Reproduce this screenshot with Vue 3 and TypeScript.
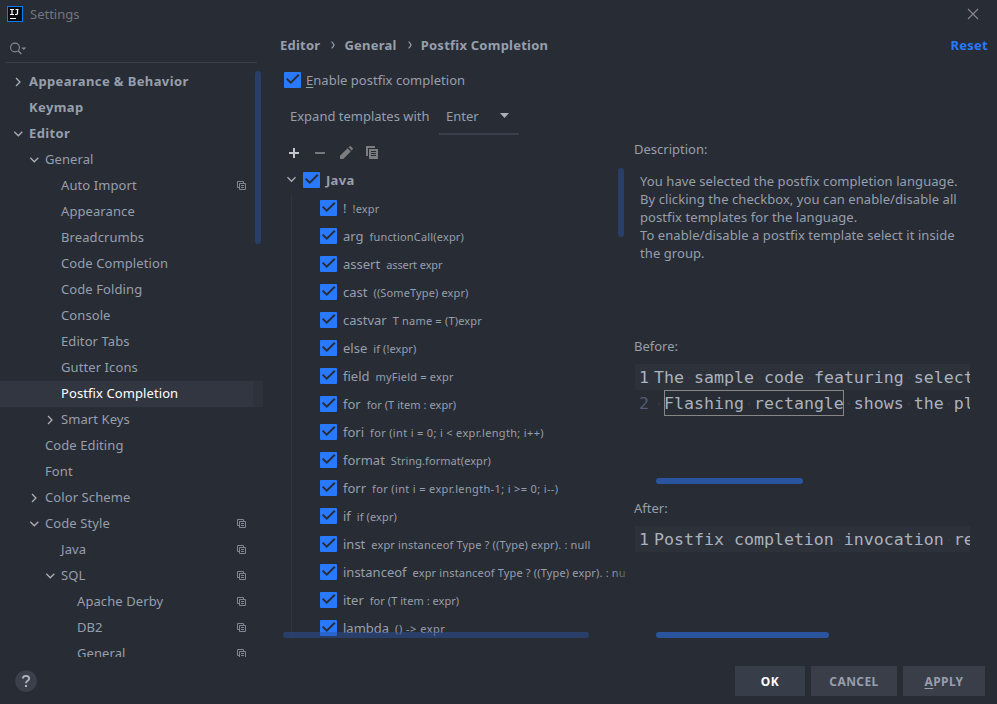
<script setup lang="ts">
interface TreeItem {
  label: string
  depth: number
  arrow?: 'open' | 'closed'
  bold?: boolean
  copy?: boolean
  selected?: boolean
}
interface Template {
  name: string
  example: string
  tracking: number
}

const tree: TreeItem[] = [
  { label: 'Appearance & Behavior', depth: 0, arrow: 'closed', bold: true },
  { label: 'Keymap', depth: 0, bold: true },
  { label: 'Editor', depth: 0, arrow: 'open', bold: true },
  { label: 'General', depth: 1, arrow: 'open' },
  { label: 'Auto Import', depth: 2, copy: true },
  { label: 'Appearance', depth: 2 },
  { label: 'Breadcrumbs', depth: 2 },
  { label: 'Code Completion', depth: 2 },
  { label: 'Code Folding', depth: 2 },
  { label: 'Console', depth: 2 },
  { label: 'Editor Tabs', depth: 2 },
  { label: 'Gutter Icons', depth: 2 },
  { label: 'Postfix Completion', depth: 2, selected: true },
  { label: 'Smart Keys', depth: 2, arrow: 'closed' },
  { label: 'Code Editing', depth: 1 },
  { label: 'Font', depth: 1 },
  { label: 'Color Scheme', depth: 1, arrow: 'closed' },
  { label: 'Code Style', depth: 1, arrow: 'open', copy: true },
  { label: 'Java', depth: 2, copy: true },
  { label: 'SQL', depth: 2, arrow: 'open', copy: true },
  { label: 'Apache Derby', depth: 3, copy: true },
  { label: 'DB2', depth: 3, copy: true },
  { label: 'General', depth: 3, copy: true },
]

const templates: Template[] = [
  { name: '!', example: '!expr', tracking: 0.2 },
  { name: 'arg', example: 'functionCall(expr)', tracking: 0.17 },
  { name: 'assert', example: 'assert expr', tracking: -0.1 },
  { name: 'cast', example: '((SomeType) expr)', tracking: 0.13 },
  { name: 'castvar', example: 'T name = (T)expr', tracking: 0.19 },
  { name: 'else', example: 'if (!expr)', tracking: 0.1 },
  { name: 'field', example: 'myField = expr', tracking: 0.2 },
  { name: 'for', example: 'for (T item : expr)', tracking: 0.05 },
  { name: 'fori', example: 'for (int i = 0; i < expr.length; i++)', tracking: 0.33 },
  { name: 'format', example: 'String.format(expr)', tracking: 0.05 },
  { name: 'forr', example: 'for (int i = expr.length-1; i >= 0; i--)', tracking: 0.35 },
  { name: 'if', example: 'if (expr)', tracking: 0.1 },
  { name: 'inst', example: 'expr instanceof Type ? ((Type) expr). : null', tracking: 0.16 },
  { name: 'instanceof', example: 'expr instanceof Type ? ((Type) expr). : null', tracking: 0.16 },
  { name: 'iter', example: 'for (T item : expr)', tracking: 0.05 },
  { name: 'lambda', example: '() -> expr', tracking: 0.5 },
]
</script>

<template>
  <div class="window">
    <header class="titlebar">
      <svg class="logo" width="16" height="16" viewBox="0 0 16 16">
        <rect x="0.5" y="0.5" width="15" height="15" fill="#0b0d10" stroke="#087cfa" />
        <path d="M3 3.5h4M5 3.5v5M3 8.500h4M8.500 3.500h3M10.500 3v4.200q0 1.300-1.300 1.300H8" fill="none" stroke="#fff" stroke-width="1.200" />
        <rect x="3" y="12" width="6" height="1" fill="#fff" />
      </svg>
      <span class="title">Settings</span>
      <svg class="close" width="12" height="12" viewBox="0 0 12 12"><path d="M1 1l10 10M11 1L1 11" /></svg>
    </header>

    <div class="body">
      <aside class="sidebar">
        <div class="search">
          <svg width="17" height="13" viewBox="0 0 17 13">
            <circle cx="5" cy="5.5" r="4.4" fill="none" stroke="#868b95" stroke-width="1.1" />
            <path d="M8.200 8.700l3.200 3.200" stroke="#868b95" stroke-width="1.400" />
            <path d="M11.300 5.400h5l-2.500 2.700z" fill="#868b95" />
          </svg>
        </div>
        <nav class="tree">
          <div
            v-for="(item, i) in tree"
            :key="i"
            class="node"
            :class="['depth' + item.depth, { selected: item.selected, bold: item.bold }]"
          >
            <span class="arrow">
              <svg v-if="item.arrow === 'open'" width="10" height="10" viewBox="0 0 10 10"><path d="M1.300 2.800l4 4 4-4" /></svg>
              <svg v-else-if="item.arrow === 'closed'" width="10" height="10" viewBox="0 0 10 10"><path d="M3 1l4 4-4 4" /></svg>
            </span>
            <span class="label">{{ item.label }}</span>
            <svg v-if="item.copy" class="copy" width="9" height="9" viewBox="0 0 9 9">
              <path d="M2 6.500H.5v-6h6V2M2.500 2.500h6v6h-6zM4 4.500h3M4 6.500h3" />
            </svg>
          </div>
          <div class="vbar"></div>
        </nav>
      </aside>

      <main class="content">
        <div class="crumbs">
          <span>Editor</span>
          <svg width="4" height="8" viewBox="0 0 4 8"><path d="M.6.6Q2.600 2.600 3 4 2.600 5.400.6 7.400" /></svg>
          <span>General</span>
          <svg width="4" height="8" viewBox="0 0 4 8"><path d="M.6.6Q2.600 2.600 3 4 2.600 5.400.6 7.400" /></svg>
          <span>Postfix Completion</span>
          <a class="reset">Reset</a>
        </div>

        <div class="enable">
          <span class="check"><svg width="17" height="16" viewBox="0 0 17 16"><path d="M2.600 6.600l4.200 4 8-7.800" /></svg></span>
          <span><u>E</u>nable postfix completion</span>
        </div>

        <div class="expand">
          <span class="expand-label">Expand templates with</span>
          <div class="select">
            <span>Enter</span>
            <svg width="9" height="5" viewBox="0 0 9 5"><path d="M0 0h9L4.500 5z" fill="#a9b0bc" /></svg>
          </div>
        </div>

        <div class="columns">
          <section class="left">
            <div class="toolbar">
              <svg width="16" height="16" viewBox="0 0 16 16"><path d="M8 3v10M3 8h10" stroke="#c3c6cb" stroke-width="2" /></svg>
              <svg width="16" height="16" viewBox="0 0 16 16"><path d="M3 8h10" stroke="#75777a" stroke-width="2" /></svg>
              <svg width="16" height="16" viewBox="0 0 16 16">
                <path d="M2 14v-3.200l7.600-7.600 3.200 3.200L5.200 14zM10.500 2.300l.9-.9q.8-.6 1.500 0l1.700 1.700q.6.700 0 1.500l-.9.9z" fill="#7c7d7f" />
              </svg>
              <svg width="16" height="16" viewBox="0 0 16 16">
                <path d="M2 1h9v2H4v8H2z" fill="#7c7d7f" />
                <path d="M5 4h9v10H5z" fill="#7c7d7f" />
                <path d="M7 6.500h5M7 8.500h5M7 10.500h5" stroke="#282c34" />
              </svg>
            </div>
            <div class="list">
              <div class="group">
                <svg class="chev" width="10" height="10" viewBox="0 0 10 10"><path d="M1.500 2.300l4 4 4-4" /></svg>
                <span class="check"><svg width="17" height="16" viewBox="0 0 17 16"><path d="M2.600 6.600l4.200 4 8-7.800" /></svg></span>
                <b>Java</b>
              </div>
              <div class="items">
                <div v-for="t in templates" :key="t.name" class="item">
                  <span class="check"><svg width="17" height="16" viewBox="0 0 17 16"><path d="M2.600 6.600l4.200 4 8-7.800" /></svg></span>
                  <span class="name">{{ t.name }}</span>
                  <span class="example" :style="{ letterSpacing: t.tracking + 'px' }">{{ t.example }}</span>
                </div>
              </div>
              <div class="fade"></div>
              <div class="list-vbar"></div>
              <div class="list-hbar"></div>
            </div>
          </section>

          <section class="right">
            <div class="caption">Description:</div>
            <p class="description">
              You have selected the postfix completion language.<br />By clicking the checkbox, you can enable/disable all<br />postfix templates for the language.<br />To enable/disable a postfix template select it inside<br />the group.
            </p>
            <div class="caption">Before:</div>
            <div class="editor before">
              <div class="line current"><span class="num">1</span><span>The<i>·</i>sample<i>·</i>code<i>·</i>featuring<i>·</i>select</span></div>
              <div class="line"><span class="num">2</span><span><i>·</i><span class="flash">Flashing<i>·</i>rectangle</span><i>·</i>shows<i>·</i>the<i>·</i>pl</span></div>
              <div class="hbar"></div>
            </div>
            <div class="caption">After:</div>
            <div class="editor after">
              <div class="line current"><span class="num">1</span><span>Postfix<i>·</i>completion<i>·</i>invocation<i>·</i>re</span></div>
              <div class="hbar"></div>
            </div>
          </section>
        </div>
      </main>
    </div>

    <footer class="footer">
      <span class="help">
        <svg width="22" height="22" viewBox="0 0 22 22">
          <circle cx="11" cy="11" r="10.800" fill="#3c404b" />
          <path d="M7.900 8.500q.1-2.600 3.100-2.600 3.100 0 3.100 2.600 0 1.300-1.500 2.300-1.600 1-1.600 2.500" fill="none" stroke="#b4b8c0" stroke-width="1.800" />
          <rect x="10" y="15" width="2" height="2" fill="#b4b8c0" />
        </svg>
      </span>
      <div class="buttons">
        <button class="btn ok">OK</button>
        <button class="btn cancel">CANCEL</button>
        <button class="btn apply"><u>A</u>PPLY</button>
      </div>
    </footer>
  </div>
</template>

<style>
body {
  background: #282c34;
}
</style>

<style scoped>
.window {
  width: 997px;
  height: 704px;
  display: flex;
  flex-direction: column;
  overflow: hidden;
  box-sizing: border-box;
  background: #282c34;
  color: #979fad;
  font: 13px/18px 'Noto Sans', sans-serif;
  white-space: nowrap;
}
svg {
  display: block;
  flex: none;
}
.titlebar {
  height: 28px;
  flex: none;
  display: flex;
  align-items: center;
  padding: 0 18px 0 7px;
}
.title {
  margin-left: 7px;
  color: #72767e;
}
.close {
  margin-left: auto;
}
.close path {
  fill: none;
  stroke: #858991;
  stroke-width: 1.1;
}
.body {
  display: flex;
  height: 629px;
  flex: none;
}
.sidebar {
  width: 263px;
  flex: none;
  display: flex;
  flex-direction: column;
}
.search {
  height: 35px;
  box-sizing: border-box;
  margin: 0 6px;
  border-bottom: 1px solid #3a3f4b;
  padding: 14px 0 0 4px;
  flex: none;
}
.tree {
  position: relative;
  margin-top: 6px;
  flex: 1;
  min-height: 0;
  overflow: hidden;
}
.node {
  height: 26px;
  display: flex;
  align-items: center;
  padding-right: 17px;
  box-sizing: border-box;
  letter-spacing: 0.09px;
}
.label {
  padding-bottom: 2px;
}
.depth0 { padding-left: 13px; }
.depth1 { padding-left: 29px; }
.depth2 { padding-left: 45px; }
.depth3 { padding-left: 61px; }
.arrow {
  width: 16px;
  flex: none;
}
.arrow path,
.chev path {
  fill: none;
  stroke: #abaeb4;
  stroke-width: 1.3;
}
.bold {
  font-weight: 700;
  letter-spacing: 0.38px;
}
.selected {
  background: linear-gradient(to right, #323640 253px, #2e323b 253px);
  color: #fff;
}
.copy {
  margin-left: auto;
  margin-bottom: 1px;
}
.copy path {
  fill: none;
  stroke: #80858f;
}
.vbar {
  position: absolute;
  left: 255px;
  top: 2px;
  width: 6px;
  height: 173px;
  border-radius: 3px;
  background: #293f69;
}
.content {
  flex: 1;
  min-width: 0;
  display: flex;
  flex-direction: column;
  padding-left: 17px;
}
.crumbs {
  height: 34px;
  flex: none;
  display: flex;
  align-items: center;
  padding-right: 9px;
  font-weight: 700;
  letter-spacing: 0.24px;
}
.crumbs svg {
  margin: 0 9px 0 11px;
}
.crumbs path {
  fill: none;
  stroke: #979fad;
  stroke-width: 1.2;
}
.reset {
  margin-left: auto;
  color: #2979ff;
}
.enable {
  height: 36px;
  flex: none;
  display: flex;
  align-items: center;
  padding-left: 4px;
  gap: 5px;
  letter-spacing: 0.03px;
}
u {
  text-decoration: underline;
  text-underline-offset: 2px;
}
.check {
  width: 17px;
  height: 16px;
  border-radius: 1px;
  background: #2979ff;
  flex: none;
}
.check path {
  fill: none;
  stroke: #282c34;
  stroke-width: 2;
}
.expand {
  height: 37px;
  flex: none;
  display: flex;
  align-items: flex-start;
  padding-left: 10px;
}
.expand-label {
  width: 149px;
  padding-top: 9px;
}
.select {
  width: 80px;
  height: 37px;
  box-sizing: border-box;
  border-bottom: 2px solid #3a3f4b;
  display: flex;
  align-items: center;
  justify-content: space-between;
  padding: 0 10px 0 7px;
}
.columns {
  flex: 1;
  min-height: 0;
  display: flex;
}
.left {
  width: 354px;
  flex: none;
  display: flex;
  flex-direction: column;
}
.toolbar {
  height: 31px;
  flex: none;
  display: flex;
  gap: 10px;
  padding: 10px 0 0 6px;
  box-sizing: border-box;
}
.list {
  position: relative;
  height: 472px;
  width: 346px;
  overflow: hidden;
}
.group {
  height: 28px;
  display: flex;
  align-items: center;
  padding-left: 6px;
  letter-spacing: 0.3px;
}
.group .check {
  margin: 0 6px 0 7px;
}
.items {
  margin-left: 11px;
  border-left: 1px solid #30343d;
  padding-left: 28px;
}
.item {
  height: 28px;
  display: flex;
  align-items: center;
}
.name {
  margin: 0 6px;
}
.example {
  font-size: 11px;
  padding-top: 2px;
}
.fade {
  position: absolute;
  right: 0;
  top: 0;
  width: 14px;
  height: 100%;
  background: linear-gradient(to right, rgba(40, 44, 52, 0), rgba(40, 44, 52, 0.6));
}
.list-vbar {
  position: absolute;
  right: 2px;
  top: 2px;
  width: 6px;
  height: 69px;
  border-radius: 3px;
  background: #293f69;
}
.list-hbar {
  position: absolute;
  left: 3px;
  bottom: 0;
  width: 306px;
  height: 6px;
  border-radius: 3px;
  background: rgba(42, 82, 158, 0.5);
}
.right {
  width: 336px;
  flex: none;
  overflow: hidden;
}
.caption {
  height: 18px;
}
.right .caption:first-child {
  margin-top: 5px;
}
.description {
  margin: 14px 0 75px;
  padding-left: 6px;
  height: 90px;
  letter-spacing: 0.075px;
}
.editor {
  position: relative;
  margin: 9px 0 0 1px;
  overflow: hidden;
  font: 16.6px/26px 'DejaVu Sans Mono', monospace;
  color: #abb2bf;
}
.before {
  height: 120px;
  margin-bottom: 15px;
}
.after {
  height: 112px;
}
.line {
  display: flex;
  height: 26px;
  line-height: 28px;
  padding-left: 4px;
}
.line i {
  color: #343a44;
  font-style: normal;
}
.num {
  width: 15px;
  flex: none;
  color: #565d6d;
}
.current {
  background: #2c313a;
}
.current .num {
  color: #abb2bf;
}
.flash {
  box-shadow: inset 0 0 0 1px #868686;
  display: inline-block;
  height: 26px;
}
.hbar {
  position: absolute;
  left: 21px;
  bottom: 0;
  height: 6px;
  border-radius: 3px;
  background: #2a549d;
}
.before .hbar { width: 147px; }
.after .hbar { width: 173px; }
.footer {
  flex: 1;
  display: flex;
  align-items: flex-start;
  justify-content: space-between;
  padding: 9px 12px 0 15px;
}
.help {
  margin-top: 4px;
}
.buttons {
  display: flex;
  gap: 6px;
}
.btn {
  height: 30px;
  border: 0;
  padding: 2px 0 0;
  background: #3a3e49;
  color: #979fad;
  font: 700 12px/28px 'Noto Sans', sans-serif;
  letter-spacing: 0.4px;
}
.ok { width: 70px; color: #fff; background: #383e49; }
.cancel { width: 86px; }
.apply { width: 82px; }
</style>
